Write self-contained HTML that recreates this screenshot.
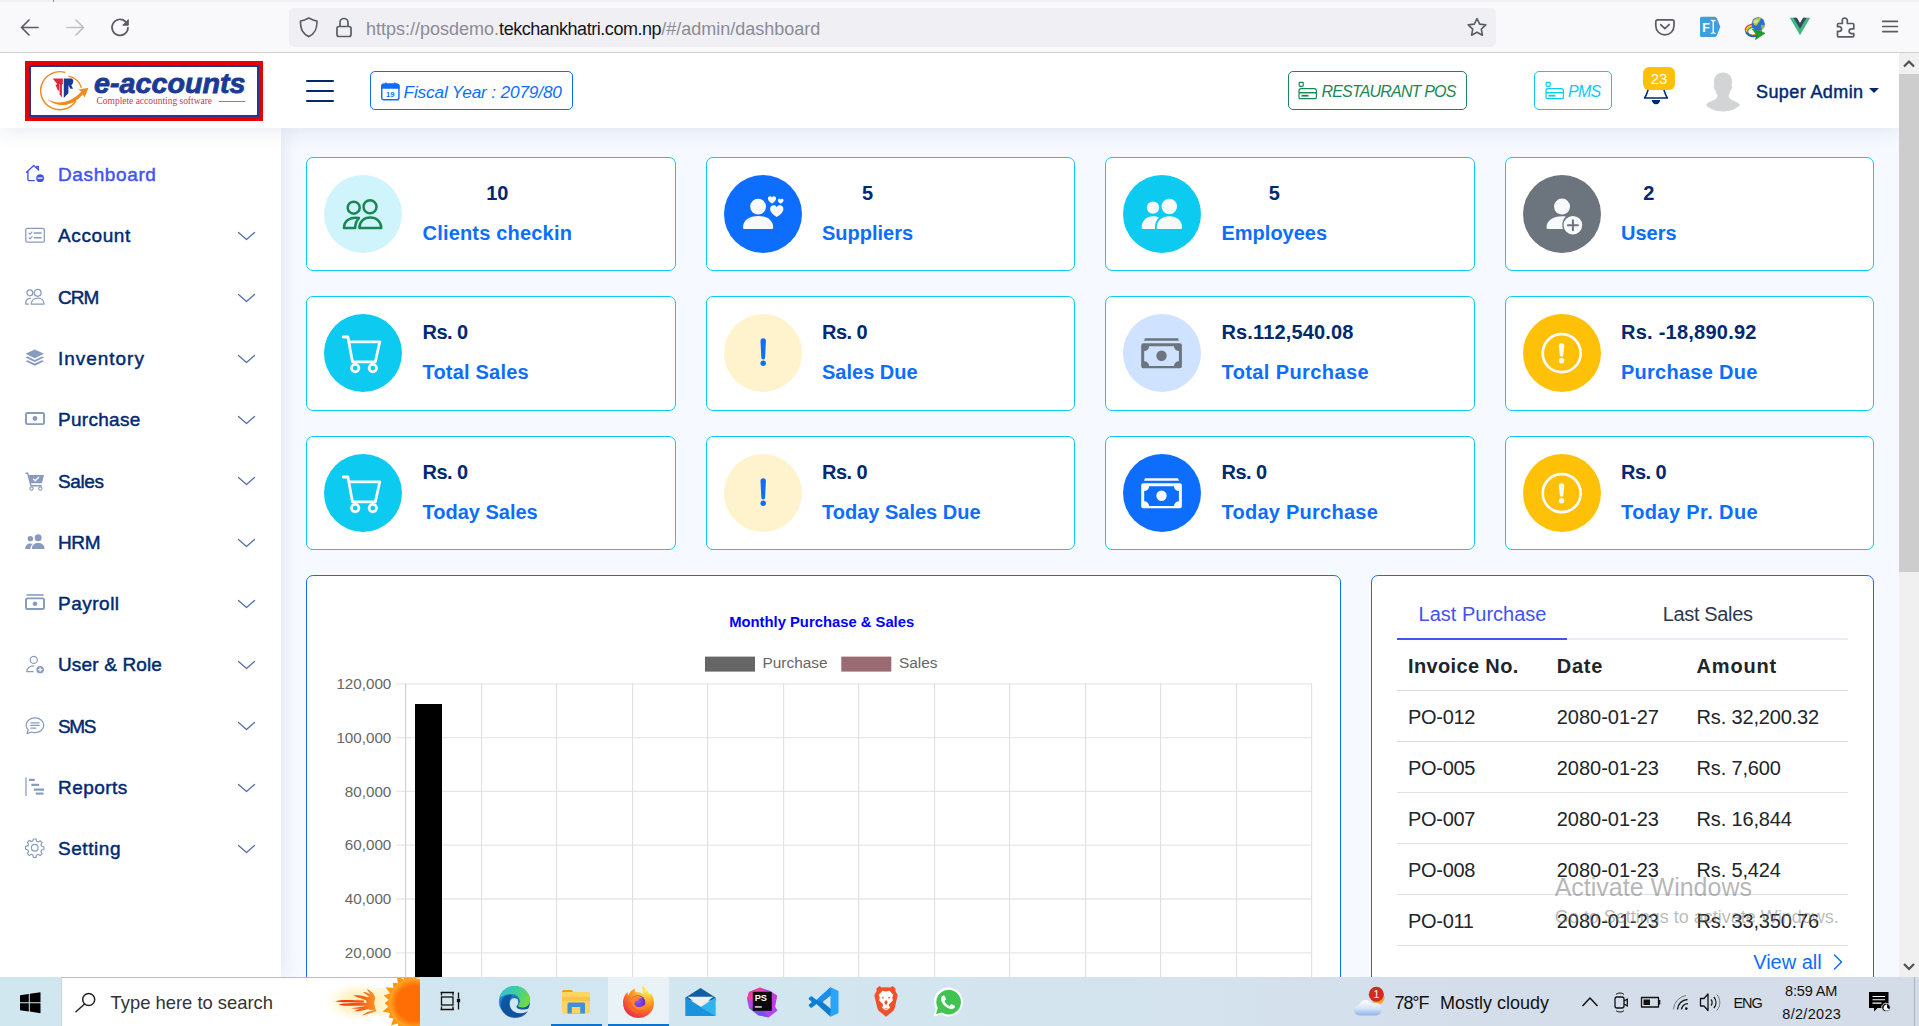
<!DOCTYPE html>
<html><head><meta charset="utf-8">
<style>
*{box-sizing:border-box;margin:0;padding:0}
html,body{width:1919px;height:1026px;overflow:hidden;background:#f6f9ff;font-family:"Liberation Sans",sans-serif;}
.abs{position:absolute}
#chrome{z-index:5;position:absolute;left:0;top:0;width:1919px;height:53px;background:#f9f9fb;border-bottom:1px solid #cfcfd4}
#urlbar{position:absolute;left:289px;top:7.500px;width:1207px;height:39.500px;background:#f0f0f4;border-radius:5px}
#url{position:absolute;left:366px;top:19.200px;font-size:18px;line-height:20px;color:#8b8b97;letter-spacing:0px;white-space:nowrap}
#url b{font-weight:normal;color:#15141a}
#header{position:absolute;left:0;top:53px;width:1899px;height:75px;background:#fff;box-shadow:0 2px 20px rgba(1,41,112,.1)}
#sidebar{position:absolute;left:0;top:128px;width:281px;height:849px;background:#fff;box-shadow:0 0 20px rgba(1,41,112,.1)}
#main{position:absolute;left:281px;top:128px;width:1618px;height:849px;background:#f6f9ff}
#vscroll{position:absolute;left:1899px;top:53px;width:20px;height:924px;background:#f0f0f0}
#vthumb{position:absolute;left:0;top:21px;width:20px;height:498px;background:#cdcdcd}
#taskbar{position:absolute;left:0;top:977px;width:1919px;height:49px;background:linear-gradient(90deg,#d0e7f0 0%,#d2e6f0 40%,#d4e3ee 62%,#d4deea 76%,#d4dce8 100%)}
.nav{position:absolute;left:58px;font-size:19px;line-height:22px;white-space:nowrap}
.card{position:absolute;width:369.700px;height:114px;background:#fff;border:1.500px solid #0dcaf0;border-radius:7px}
.circ{position:absolute;left:17.200px;top:16.500px;width:78px;height:78px;border-radius:50%}
.grp{position:absolute;left:115.500px;top:22.500px;text-align:center}
.val{font-size:20px;line-height:24px;font-weight:bold;color:#012970;white-space:nowrap}
.lbl{margin-top:16px;font-size:20px;line-height:24px;font-weight:bold;color:#0d6efd;white-space:nowrap}
.panel{position:absolute;background:#fff;border:1.5px solid #0d6efd;border-radius:7px}
.btn{background:#fff;border:1.5px solid;border-radius:5px}
.hbtxt{font-size:17px;line-height:22px;font-style:italic;white-space:nowrap}
.rt{font-size:20px;line-height:24px;color:#212529;white-space:nowrap}
</style></head><body>
<div id="chrome">
  <div style="position:absolute;left:0;top:0;width:1919px;height:2px;background:#f0f0f4"></div>
  <div style="position:absolute;left:53px;top:0;width:1px;height:2px;background:#8f8f9d"></div>
  <svg class="abs" style="left:0;top:0" width="289" height="52" fill="none" stroke="#5b5b66" stroke-width="1.7" stroke-linecap="round" stroke-linejoin="round">
    <path d="M38 27.5H22M29 20l-7.5 7.5L29 35"/>
    <path d="M67 27.5h16M76 20l7.5 7.5L76 35" stroke="#bfbfc9"/>
    <path d="M128 27.5a8 8 0 1 1-2.6-6"/>
    <path d="M128.3 20v5.2h-5.2z" fill="#5b5b66" stroke-width="1"/>
  </svg>
  <div id="urlbar"></div>
  <svg class="abs" style="left:289px;top:8px" width="80" height="38" fill="none" stroke="#5b5b66" stroke-width="1.7" stroke-linejoin="round">
    <path d="M19.8 10 C16 12 14 12.6 11.5 13 C11.5 22 14 26 19.8 28.6 C25.5 26 28 22 28 13 C25.5 12.6 23.5 12 19.8 10z"/>
    <rect x="48" y="18.5" width="14" height="10" rx="2"/>
    <path d="M51 18.5v-4a4 4 0 0 1 8 0v4"/>
  </svg>
  <div id="url"><span id="u1">https://posdemo.</span><b id="u2" style="letter-spacing:-0.45px">tekchankhatri.com.np</b><span id="u3">/#/admin/dashboard</span></div>
  <svg class="abs" style="left:1460px;top:8px" width="36" height="38" fill="none" stroke="#5b5b66" stroke-width="1.6" stroke-linejoin="round">
    <path d="M17 10.5l2.7 5.6 6.1.8-4.5 4.2 1.1 6.1-5.4-3-5.4 3 1.1-6.1-4.5-4.2 6.1-.8z"/>
  </svg>
  <svg class="abs" style="left:1640px;top:8px" width="279" height="38" fill="none" stroke="#5b5b66" stroke-width="1.6" stroke-linejoin="round" stroke-linecap="round">
    <!-- pocket -->
    <path d="M17.500 11.800h14.800a1.700 1.700 0 0 1 1.700 1.700v4.300a9.100 9.100 0 0 1-18.200 0v-4.300a1.700 1.700 0 0 1 1.700-1.700z" stroke-width="1.700"/>
    <path d="M20.700 16.600l4.200 4 4.200-4" stroke-width="1.700"/>
    <!-- FI ext -->
    <path d="M61.500 8.800h13.500l1.800 1.200 3.500 8.800-3.500 8.900-1.800 1.200H61.500a1.500 1.500 0 0 1-1.500-1.500V10.300a1.500 1.500 0 0 1 1.500-1.500z" fill="#3f9fdc" stroke="none"/>
    <text x="62.300" y="24" font-family="Liberation Sans" font-size="12.500" font-weight="bold" fill="#fff" stroke="none">F</text>
    <path d="M71.300 12.300c1 0 1.600.4 1.900 1 .3-.6.900-1 1.900-1M71.300 25.300c1 0 1.600-.4 1.900-1 .3.600.9 1 1.900 1M73.200 13.300v11" stroke="#fff" stroke-width="1.300" fill="none"/>
    <!-- idm -->
    <ellipse cx="112.500" cy="22" rx="7" ry="5.500" fill="none" stroke="#e8432e" stroke-width="1.500"/>
    <ellipse cx="113.500" cy="22.500" rx="7" ry="5" fill="none" stroke="#f2c21b" stroke-width="1.500"/>
    <ellipse cx="114.500" cy="23.500" rx="7" ry="4.500" fill="none" stroke="#3aa845" stroke-width="1.500"/>
    <path d="M106.500 25c2 3 7 4 11 2.500" stroke="#2b62c9" stroke-width="2" fill="none"/>
    <circle cx="118.200" cy="16" r="6.700" fill="#2d6fd0" stroke="none"/>
    <path d="M113 13c1.500-2.500 5-4 8-3-1 1.500-.5 3-2 4s-1 3-3 3.500-2-2-3-2.500-.500-1.300 0-2z" fill="#b8c93a" stroke="none"/>
    <path d="M121 17c1.500-.5 3 .5 3.500 1.500-.5 1.500-1.500 2.500-2.500 3-.5-1.500-1.500-3-1-4.500z" fill="#8fbf3a" stroke="none"/>
    <circle cx="116" cy="13.500" r="2" fill="#fff" opacity=".45" stroke="none"/>
    <path d="M112.500 21l12.500 4.200-9.500 6.300 1-4.500z" fill="#1f9d2a" stroke="#117a1c" stroke-width=".6"/>
    <!-- vue -->
    <path d="M149.800 9.800h6.200l4 6.900 4-6.900h6.200l-10.200 17.500z" fill="#41b883" stroke="none"/>
    <path d="M153.500 9.800h3.400l3.100 5.300 3.100-5.300h3.400l-6.500 11.200z" fill="#35495e" stroke="none"/>
    <!-- puzzle -->
    <path d="M198.500 15.500h3.800v-3a2.500 2.500 0 1 1 5 0v3h5.500a1 1 0 0 1 1 1v4.300h-2.300a2.400 2.400 0 1 0 0 4.800h2.300v2.200a1 1 0 0 1-1 1h-14.300a1 1 0 0 1-1-1v-4.500h1.800a2.300 2.300 0 1 0 0-4.600h-1.800v-2.200a1 1 0 0 1 1-1z" stroke-width="1.700"/>
    <!-- menu -->
    <path d="M242.800 13.400h14.600M242.800 18.500h14.600M242.800 23.600h14.600" stroke-width="1.700"/>
  </svg>
</div>
<div id="main">
<div class="card" style="left:25.0px;top:29.0px"><div class="circ" style="background:#cff4fc"><svg width="78" height="78" viewBox="0 0 78 78"><g fill="none" stroke="#198754" stroke-width="2.500" stroke-linejoin="round"><circle cx="46" cy="31.700" r="6.500"/><path d="M35.400 53c0-6.500 4.500-10.400 10.800-10.400S57.200 46.500 57.200 53z"/><circle cx="29.700" cy="32.700" r="6"/><path d="M35 43c-9-1.500-15 3-15 10h11.200c0-4 1.300-7.500 3.800-10z"/></g></svg></div>
<div class="grp" id="g0"><div class="val" id="v0">10</div><div class="lbl" id="l0" style="letter-spacing:0.19px">Clients checkin</div></div></div>
<div class="card" style="left:424.5px;top:29.0px"><div class="circ" style="background:#0d6efd"><svg width="78" height="78" viewBox="0 0 78 78"><g fill="#f8f9fa"><circle cx="34.100" cy="31.600" r="7.900"/><path d="M19 52.500c0-7.500 6.500-11.500 15.100-11.500s15.100 4 15.100 11.500c0 1-.7 1.500-1.500 1.500H20.500c-.8 0-1.500-.5-1.500-1.500z"/><path d="M52.700 42c-4.500-3-6.600-5.200-6.600-8 0-4 5-5 6.600-1.700 1.700-3.300 6.700-2.300 6.700 1.700 0 2.800-2.200 5-6.700 8z"/><path d="M48 28.600c-2.800-1.900-4.100-3.300-4.100-5 0-2.500 3.100-3.100 4.100-1.100 1-2 4.100-1.400 4.100 1.100 0 1.700-1.300 3.100-4.100 5z"/><path d="M56.700 28.800c-2-1.300-2.900-2.300-2.900-3.500 0-1.700 2.200-2.200 2.900-.8.700-1.400 2.900-.9 2.900.8 0 1.200-.9 2.200-2.900 3.500z"/></g></svg></div>
<div class="grp" id="g1"><div class="val" id="v1">5</div><div class="lbl" id="l1">Suppliers</div></div></div>
<div class="card" style="left:824.0px;top:29.0px"><div class="circ" style="background:#0dcaf0"><svg width="78" height="78" viewBox="0 0 78 78"><g fill="#f8f9fa"><circle cx="46.300" cy="31.600" r="7.750"/><path d="M33.700 52.500c0-7 5.500-11.300 12.700-11.300s12.700 4.300 12.700 11.300c0 1-.7 1.500-1.500 1.500H35.200c-.8 0-1.500-.5-1.500-1.500z"/><circle cx="30" cy="32.600" r="6.200"/><path d="M20.200 54c-.8 0-1.500-.5-1.500-1.500 0-7 4.800-11.300 11.300-11.300 2.200 0 4.300.4 6 1.200-2.700 2.500-4.100 6-4.100 10.100 0 .5.100 1 .2 1.500z"/></g></svg></div>
<div class="grp" id="g2"><div class="val" id="v2">5</div><div class="lbl" id="l2">Employees</div></div></div>
<div class="card" style="left:1223.5px;top:29.0px"><div class="circ" style="background:#6c757d"><svg width="78" height="78" viewBox="0 0 78 78"><g fill="#f8f9fa"><circle cx="39" cy="31.600" r="8"/><path d="M23.500 52.500c0-7 6.500-11.300 15.500-11.300 1.300 0 2.600.1 3.800.3-2.200 2.100-3.500 5-3.500 8.500 0 1.400.2 2.800.7 4H25c-.8 0-1.500-.5-1.500-1.500z"/><circle cx="49.900" cy="50.200" r="9.300"/><path d="M49.900 45.200v10M44.900 50.200h10" stroke="#6c757d" stroke-width="2" stroke-linecap="round"/></g></svg></div>
<div class="grp" id="g3"><div class="val" id="v3">2</div><div class="lbl" id="l3">Users</div></div></div>
<div class="card" style="left:25.0px;top:168px;height:115px"><div class="circ" style="background:#0dcaf0"><svg width="78" height="78" viewBox="0 0 78 78"><g fill="none" stroke="#f8f9fa" stroke-width="2.800" stroke-linecap="round" stroke-linejoin="round"><path d="M19.200 23h4.700l4.600 24.900h22.800l4.500-20.100H25.600"/><circle cx="31.200" cy="54.100" r="3.700"/><circle cx="48.800" cy="54.100" r="3.700"/></g></svg></div>
<div class="grp" id="g4"><div class="val" id="v4" style="text-align:left;letter-spacing:-0.55px">Rs. 0</div><div class="lbl" id="l4" style="letter-spacing:0.2px">Total Sales</div></div></div>
<div class="card" style="left:424.5px;top:168px;height:115px"><div class="circ" style="background:#fff3cd"><svg width="78" height="78" viewBox="0 0 78 78"><g fill="#0d6efd"><path d="M36.500 27a2.700 2.700 0 0 1 5.400 0l-.8 16.500a1.900 1.900 0 0 1-3.800 0z"/><circle cx="39.200" cy="49.200" r="2.700"/></g></svg></div>
<div class="grp" id="g5"><div class="val" id="v5" style="text-align:left;letter-spacing:-0.55px">Rs. 0</div><div class="lbl" id="l5">Sales Due</div></div></div>
<div class="card" style="left:824.0px;top:168px;height:115px"><div class="circ" style="background:#cfe2ff"><svg width="78" height="78" viewBox="0 0 78 78"><g><path d="M22 24.300h33l1 2.500H21z" fill="#6c757d"/><path d="M20.200 29.300h36.700a2 2 0 0 1 2 2v20.900a2 2 0 0 1-2 2H20.200a2 2 0 0 1-2-2V31.300a2 2 0 0 1 2-2zM26.100 32.200a4.900 4.900 0 0 1-4.900 4.900v10.100a4.900 4.900 0 0 1 4.900 4.900h24.900a4.900 4.900 0 0 1 4.900-4.900V37.100a4.900 4.900 0 0 1-4.900-4.900z" fill="#6c757d" fill-rule="evenodd"/><circle cx="38.500" cy="41.700" r="5.200" fill="#6c757d"/></g></svg></div>
<div class="grp" id="g6"><div class="val" id="v6" style="text-align:left;letter-spacing:0.15px">Rs.112,540.08</div><div class="lbl" id="l6" style="letter-spacing:0.4px">Total Purchase</div></div></div>
<div class="card" style="left:1223.5px;top:168px;height:115px"><div class="circ" style="background:#ffc107"><svg width="78" height="78" viewBox="0 0 78 78"><g><circle cx="38.700" cy="39.200" r="19" fill="none" stroke="#f8f9fa" stroke-width="2.700"/><path d="M35.800 32a2.750 2.750 0 0 1 5.500 0l-1 9a1.750 1.750 0 0 1-3.500 0z" fill="#f8f9fa"/><circle cx="38.600" cy="46.700" r="2.700" fill="#f8f9fa"/></g></svg></div>
<div class="grp" id="g7"><div class="val" id="v7" style="text-align:left;letter-spacing:0.24px">Rs. -18,890.92</div><div class="lbl" id="l7" style="letter-spacing:0.26px">Purchase Due</div></div></div>
<div class="card" style="left:25.0px;top:308.0px"><div class="circ" style="background:#0dcaf0"><svg width="78" height="78" viewBox="0 0 78 78"><g fill="none" stroke="#f8f9fa" stroke-width="2.800" stroke-linecap="round" stroke-linejoin="round"><path d="M19.200 23h4.700l4.600 24.900h22.800l4.500-20.100H25.600"/><circle cx="31.200" cy="54.100" r="3.700"/><circle cx="48.800" cy="54.100" r="3.700"/></g></svg></div>
<div class="grp" id="g8"><div class="val" id="v8" style="text-align:left;letter-spacing:-0.55px">Rs. 0</div><div class="lbl" id="l8">Today Sales</div></div></div>
<div class="card" style="left:424.5px;top:308.0px"><div class="circ" style="background:#fff3cd"><svg width="78" height="78" viewBox="0 0 78 78"><g fill="#0d6efd"><path d="M36.500 27a2.700 2.700 0 0 1 5.400 0l-.8 16.500a1.900 1.900 0 0 1-3.800 0z"/><circle cx="39.200" cy="49.200" r="2.700"/></g></svg></div>
<div class="grp" id="g9"><div class="val" id="v9" style="text-align:left;letter-spacing:-0.55px">Rs. 0</div><div class="lbl" id="l9">Today Sales Due</div></div></div>
<div class="card" style="left:824.0px;top:308.0px"><div class="circ" style="background:#0d6efd"><svg width="78" height="78" viewBox="0 0 78 78"><g><path d="M22 24.300h33l1 2.500H21z" fill="#f8f9fa"/><path d="M20.200 29.300h36.700a2 2 0 0 1 2 2v20.900a2 2 0 0 1-2 2H20.200a2 2 0 0 1-2-2V31.300a2 2 0 0 1 2-2zM26.100 32.200a4.900 4.900 0 0 1-4.900 4.900v10.100a4.900 4.900 0 0 1 4.900 4.900h24.900a4.900 4.900 0 0 1 4.900-4.900V37.100a4.900 4.900 0 0 1-4.900-4.900z" fill="#f8f9fa" fill-rule="evenodd"/><circle cx="38.500" cy="41.700" r="5.200" fill="#f8f9fa"/></g></svg></div>
<div class="grp" id="g10"><div class="val" id="v10" style="text-align:left;letter-spacing:-0.55px">Rs. 0</div><div class="lbl" id="l10" style="letter-spacing:0.25px">Today Purchase</div></div></div>
<div class="card" style="left:1223.5px;top:308.0px"><div class="circ" style="background:#ffc107"><svg width="78" height="78" viewBox="0 0 78 78"><g><circle cx="38.700" cy="39.200" r="19" fill="none" stroke="#f8f9fa" stroke-width="2.700"/><path d="M35.800 32a2.750 2.750 0 0 1 5.500 0l-1 9a1.750 1.750 0 0 1-3.500 0z" fill="#f8f9fa"/><circle cx="38.600" cy="46.700" r="2.700" fill="#f8f9fa"/></g></svg></div>
<div class="grp" id="g11"><div class="val" id="v11" style="text-align:left;letter-spacing:-0.55px">Rs. 0</div><div class="lbl" id="l11" style="letter-spacing:0.4px">Today Pr. Due</div></div></div>
<div class="panel" style="left:25px;top:447px;width:1035px;height:480px"></div>
<svg class="abs" style="left:25px;top:447px" width="1034" height="420" font-family="Liberation Sans">
<path d="M90.3 108.80H1006" stroke="#e7e7e7" stroke-width="1.300"/>
<path d="M90.3 162.60H1006" stroke="#e7e7e7" stroke-width="1.300"/>
<path d="M90.3 216.40H1006" stroke="#e7e7e7" stroke-width="1.300"/>
<path d="M90.3 270.20H1006" stroke="#e7e7e7" stroke-width="1.300"/>
<path d="M90.3 324.00H1006" stroke="#e7e7e7" stroke-width="1.300"/>
<path d="M90.3 377.80H1006" stroke="#e7e7e7" stroke-width="1.300"/>
<path d="M99.6 108.2V420" stroke="#cfcfcf" stroke-width="1.100"/>
<path d="M175.6 108.2V420" stroke="#e0e0e0" stroke-width="1.100"/>
<path d="M250.6 108.2V420" stroke="#e0e0e0" stroke-width="1.100"/>
<path d="M326.6 108.2V420" stroke="#e0e0e0" stroke-width="1.100"/>
<path d="M401.6 108.2V420" stroke="#e0e0e0" stroke-width="1.100"/>
<path d="M477.6 108.2V420" stroke="#e0e0e0" stroke-width="1.100"/>
<path d="M552.6 108.2V420" stroke="#e0e0e0" stroke-width="1.100"/>
<path d="M628.6 108.2V420" stroke="#e0e0e0" stroke-width="1.100"/>
<path d="M703.6 108.2V420" stroke="#e0e0e0" stroke-width="1.100"/>
<path d="M779.6 108.2V420" stroke="#e0e0e0" stroke-width="1.100"/>
<path d="M854.6 108.2V420" stroke="#e0e0e0" stroke-width="1.100"/>
<path d="M930.6 108.2V420" stroke="#e0e0e0" stroke-width="1.100"/>
<path d="M1005.6 108.2V420" stroke="#e0e0e0" stroke-width="1.100"/>
<rect x="109" y="129.0" width="27" height="300" fill="#000"/>
<text id="ctitle" x="515.7" y="51.6" text-anchor="middle" font-size="14.800" font-weight="bold" fill="#0000ff">Monthly Purchase &amp; Sales</text>
<rect x="399" y="81.6" width="50" height="15" fill="#666"/>
<text x="456.5" y="92.6" font-size="15.400" fill="#666">Purchase</text>
<rect x="535.3" y="81.6" width="50" height="15" fill="#9b6b73"/>
<text x="593.0" y="92.6" font-size="15.400" fill="#666">Sales</text>
<text x="85.3" y="113.9" text-anchor="end" font-size="15.200" fill="#666">120,000</text>
<text x="85.3" y="167.7" text-anchor="end" font-size="15.200" fill="#666">100,000</text>
<text x="85.3" y="221.5" text-anchor="end" font-size="15.200" fill="#666">80,000</text>
<text x="85.3" y="275.3" text-anchor="end" font-size="15.200" fill="#666">60,000</text>
<text x="85.3" y="329.1" text-anchor="end" font-size="15.200" fill="#666">40,000</text>
<text x="85.3" y="382.9" text-anchor="end" font-size="15.200" fill="#666">20,000</text>
</svg>
<div class="panel" style="left:1090px;top:447px;width:503px;height:480px"></div>
<div class="abs" style="left:1116px;top:510.3px;width:451px;height:2px;background:#e9ecf4"></div>
<div class="abs" style="left:1116px;top:510.3px;width:170px;height:2.200px;background:#4154f1"></div>
<div class="abs rt" id="t1" style="left:1137.6px;top:474.4px;color:#4154f1">Last Purchase</div>
<div class="abs rt" id="t2" style="left:1381.7px;top:474.4px;color:#2c384e;letter-spacing:-0.35px">Last Sales</div>
<div class="abs rt" id="h1" style="left:1127.1px;top:525.5px;font-weight:bold;letter-spacing:0.35px">Invoice No.</div>
<div class="abs rt" id="h2" style="left:1275.7px;top:525.5px;font-weight:bold;letter-spacing:0.75px">Date</div>
<div class="abs rt" id="h3" style="left:1415.6px;top:525.5px;font-weight:bold;letter-spacing:0.8px">Amount</div>
<div class="abs rt" id="r0a" style="left:1127.1px;top:577.3px;letter-spacing:-0.33px">PO-012</div>
<div class="abs rt" id="r0b" style="left:1275.7px;top:577.3px;">2080-01-27</div>
<div class="abs rt" id="r0c" style="left:1415.6px;top:577.3px;letter-spacing:-0.17px">Rs. 32,200.32</div>
<div class="abs rt" id="r1a" style="left:1127.1px;top:628.3px;letter-spacing:-0.33px">PO-005</div>
<div class="abs rt" id="r1b" style="left:1275.7px;top:628.3px;">2080-01-23</div>
<div class="abs rt" id="r1c" style="left:1415.6px;top:628.3px;letter-spacing:-0.17px">Rs. 7,600</div>
<div class="abs rt" id="r2a" style="left:1127.1px;top:679.3px;letter-spacing:-0.33px">PO-007</div>
<div class="abs rt" id="r2b" style="left:1275.7px;top:679.3px;">2080-01-23</div>
<div class="abs rt" id="r2c" style="left:1415.6px;top:679.3px;letter-spacing:-0.17px">Rs. 16,844</div>
<div class="abs rt" id="r3a" style="left:1127.1px;top:730.3px;letter-spacing:-0.33px">PO-008</div>
<div class="abs rt" id="r3b" style="left:1275.7px;top:730.3px;">2080-01-23</div>
<div class="abs rt" id="r3c" style="left:1415.6px;top:730.3px;letter-spacing:-0.17px">Rs. 5,424</div>
<div class="abs rt" id="r4a" style="left:1127.1px;top:781.3px;letter-spacing:-0.33px">PO-011</div>
<div class="abs rt" id="r4b" style="left:1275.7px;top:781.3px;">2080-01-23</div>
<div class="abs rt" id="r4c" style="left:1415.6px;top:781.3px;letter-spacing:-0.17px">Rs. 33,350.76</div>
<div class="abs" style="left:1116px;top:561.8px;width:451px;height:1.200px;background:#dcdfe5"></div>
<div class="abs" style="left:1116px;top:612.8px;width:451px;height:1.200px;background:#dcdfe5"></div>
<div class="abs" style="left:1116px;top:663.8px;width:451px;height:1.200px;background:#dcdfe5"></div>
<div class="abs" style="left:1116px;top:714.8px;width:451px;height:1.200px;background:#dcdfe5"></div>
<div class="abs" style="left:1116px;top:765.8px;width:451px;height:1.200px;background:#dcdfe5"></div>
<div class="abs" style="left:1116px;top:816.8px;width:451px;height:1.200px;background:#dcdfe5"></div>
<div class="abs rt" id="va" style="left:1472.2px;top:822.1px;color:#0d6efd">View all</div>
<svg class="abs" style="left:1550px;top:825px" width="14" height="18" fill="none" stroke="#0d6efd" stroke-width="1.500" stroke-linecap="round" stroke-linejoin="round"><path d="M3.500 2l7 7-7 7"/></svg>
<div class="abs" id="wm1" style="left:1273.7px;top:744px;font-size:25px;line-height:30px;color:rgba(120,120,120,.55);white-space:nowrap">Activate Windows</div>
<div class="abs" id="wm2" style="left:1273.7px;top:778px;font-size:18px;line-height:22px;color:rgba(120,120,120,.5);white-space:nowrap">Go to Settings to activate Windows.</div>
</div>
<div id="sidebar">
<svg class="abs" style="left:25px;top:36.3px" width="20" height="20" viewBox="0 0 20.500 20.500"><g stroke="#4154f1" fill="none" stroke-width="1.400" stroke-linejoin="round" stroke-linecap="round"><path d="M1.500 8.500L9 1.500l5 4.700M12 4V2.500h1.700v3.300M3 7.200V16a1 1 0 0 0 1 1h5.500"/><circle cx="15.500" cy="14.500" r="4" fill="#4154f1" stroke="none"/><path d="M13.500 14.500h4" stroke="#fff" stroke-width="1.300"/></g></svg>
<div class="nav" id="n0" style="letter-spacing:0.62px;top:36.1px;color:#4154f1;-webkit-text-stroke:0.45px #4154f1">Dashboard</div>
<svg class="abs" style="left:25px;top:97.6px" width="20" height="20" viewBox="0 0 20.500 20.500"><g stroke="#899bbd" fill="none" stroke-width="1.300" stroke-linecap="round" stroke-linejoin="round"><rect x="0.800" y="2.500" width="19" height="14" rx="1.500"/><path d="M9.500 7.200h7M9.500 12h7" stroke-width="1.600"/><path d="M4 7.300l1.200 1.200 2-2.400M4 12l1.200 1.200 2-2.400" stroke-width="1.100"/></g></svg>
<div class="nav" id="n1" style="letter-spacing:0.61px;top:97.4px;color:#012970;-webkit-text-stroke:0.45px #012970">Account</div>
<svg class="abs" style="left:237px;top:102.3px" width="19" height="12" fill="none" stroke="#5570a8" stroke-width="1.300" stroke-linecap="round" stroke-linejoin="round"><path d="M1.500 2.500l8 7 8-7"/></svg>
<svg class="abs" style="left:25px;top:158.8px" width="20" height="20" viewBox="0 0 20.500 20.500"><g stroke="#899bbd" fill="none" stroke-width="1.300" stroke-linejoin="round"><circle cx="13" cy="6" r="3.500"/><path d="M6.500 17.500c0-4 3-6 6.500-6s6.500 2 6.500 6z"/><circle cx="5" cy="6" r="3"/><path d="M6 11.700c-3.500-.5-5.500 2-5.300 5.800H4"/></g></svg>
<div class="nav" id="n2" style="letter-spacing:-1.0px;top:158.6px;color:#012970;-webkit-text-stroke:0.45px #012970">CRM</div>
<svg class="abs" style="left:237px;top:163.5px" width="19" height="12" fill="none" stroke="#5570a8" stroke-width="1.300" stroke-linecap="round" stroke-linejoin="round"><path d="M1.500 2.500l8 7 8-7"/></svg>
<svg class="abs" style="left:25px;top:220.1px" width="20" height="20" viewBox="0 0 20.500 20.500"><g fill="#899bbd"><path d="M10 1.500L0.500 6 10 10.500 19.500 6z"/><path d="M2.700 8.700L0.500 9.800 10 14.300l9.500-4.500-2.200-1.100L10 12.200z"/><path d="M2.700 12.500L0.500 13.600 10 18.100l9.500-4.500-2.200-1.100L10 16z"/></g></svg>
<div class="nav" id="n3" style="letter-spacing:0.97px;top:219.9px;color:#012970;-webkit-text-stroke:0.45px #012970">Inventory</div>
<svg class="abs" style="left:237px;top:224.8px" width="19" height="12" fill="none" stroke="#5570a8" stroke-width="1.300" stroke-linecap="round" stroke-linejoin="round"><path d="M1.500 2.500l8 7 8-7"/></svg>
<svg class="abs" style="left:25px;top:281.4px" width="20" height="20" viewBox="0 0 20.500 20.500"><g><rect x="1" y="4" width="18.500" height="11.500" rx="1.500" fill="none" stroke="#899bbd" stroke-width="2"/><circle cx="10.200" cy="9.700" r="2.500" fill="#899bbd"/></g></svg>
<div class="nav" id="n4" style="letter-spacing:0.29px;top:281.2px;color:#012970;-webkit-text-stroke:0.45px #012970">Purchase</div>
<svg class="abs" style="left:237px;top:286.1px" width="19" height="12" fill="none" stroke="#5570a8" stroke-width="1.300" stroke-linecap="round" stroke-linejoin="round"><path d="M1.500 2.500l8 7 8-7"/></svg>
<svg class="abs" style="left:25px;top:342.7px" width="20" height="20" viewBox="0 0 20.500 20.500"><g fill="#899bbd"><path d="M0.500 1.500h2.800l.7 2.700h15.500l-2.200 8.300H6.200l.5 1.800h10.500v1.500H5.600L2.200 3H0.500z"/><circle cx="6.700" cy="18" r="1.700" fill="none" stroke="#899bbd" stroke-width="1.100"/><circle cx="15.700" cy="18" r="1.700" fill="none" stroke="#899bbd" stroke-width="1.100"/><path d="M8.500 8l2 2 3.800-3.800" stroke="#fff" stroke-width="1.300" fill="none"/></g></svg>
<div class="nav" id="n5" style="letter-spacing:-0.38px;top:342.5px;color:#012970;-webkit-text-stroke:0.45px #012970">Sales</div>
<svg class="abs" style="left:237px;top:347.4px" width="19" height="12" fill="none" stroke="#5570a8" stroke-width="1.300" stroke-linecap="round" stroke-linejoin="round"><path d="M1.500 2.500l8 7 8-7"/></svg>
<svg class="abs" style="left:25px;top:403.9px" width="20" height="20" viewBox="0 0 20.500 20.500"><g fill="#899bbd"><circle cx="13.500" cy="6" r="3.600"/><path d="M7 17.500c0-4.500 3-6.300 6.500-6.300s6.500 1.800 6.500 6.300z"/><circle cx="5.500" cy="6.800" r="2.800"/><path d="M0.300 17.500c0-3.800 2.200-5.800 5.200-5.800.9 0 1.700.2 2.300.5-1.500 1.200-2.200 3-2.300 5.300z"/></g></svg>
<div class="nav" id="n6" style="letter-spacing:-0.4px;top:403.7px;color:#012970;-webkit-text-stroke:0.45px #012970">HRM</div>
<svg class="abs" style="left:237px;top:408.6px" width="19" height="12" fill="none" stroke="#5570a8" stroke-width="1.300" stroke-linecap="round" stroke-linejoin="round"><path d="M1.500 2.500l8 7 8-7"/></svg>
<svg class="abs" style="left:25px;top:465.2px" width="20" height="20" viewBox="0 0 20.500 20.500"><g><path d="M1.500 2h17.500" stroke="#899bbd" stroke-width="1.600"/><rect x="1" y="5.500" width="18.500" height="11" rx="1.500" fill="none" stroke="#899bbd" stroke-width="2"/><circle cx="10.200" cy="11" r="2.400" fill="#899bbd"/></g></svg>
<div class="nav" id="n7" style="letter-spacing:0.5px;top:465.0px;color:#012970;-webkit-text-stroke:0.45px #012970">Payroll</div>
<svg class="abs" style="left:237px;top:469.9px" width="19" height="12" fill="none" stroke="#5570a8" stroke-width="1.300" stroke-linecap="round" stroke-linejoin="round"><path d="M1.500 2.500l8 7 8-7"/></svg>
<svg class="abs" style="left:25px;top:526.5px" width="20" height="20" viewBox="0 0 20.500 20.500"><g stroke="#899bbd" fill="none" stroke-width="1.300" stroke-linejoin="round"><circle cx="9" cy="5" r="3.600"/><path d="M9.500 11.200C4.500 11 1.800 13.500 1.800 17h7"/><circle cx="15.500" cy="15" r="3.800" fill="#899bbd" stroke="none"/><path d="M15.500 12.800v4.400M13.300 15h4.400" stroke="#fff" stroke-width="1.200"/></g></svg>
<div class="nav" id="n8" style="letter-spacing:0.15px;top:526.3px;color:#012970;-webkit-text-stroke:0.45px #012970">User &amp; Role</div>
<svg class="abs" style="left:237px;top:531.2px" width="19" height="12" fill="none" stroke="#5570a8" stroke-width="1.300" stroke-linecap="round" stroke-linejoin="round"><path d="M1.500 2.500l8 7 8-7"/></svg>
<svg class="abs" style="left:25px;top:587.7px" width="20" height="20" viewBox="0 0 20.500 20.500"><g stroke="#899bbd" fill="none" stroke-width="1.300" stroke-linecap="round" stroke-linejoin="round"><path d="M10.200 2c5 0 9 3.300 9 7.500s-4 7.500-9 7.500c-1.300 0-2.500-.2-3.600-.6L2 18l1.300-3.600C2 13 1.200 11.300 1.200 9.500c0-4.200 4-7.500 9-7.500z"/><path d="M6 7h8.500M6 9.700h8.500M6 12.400h5"/></g></svg>
<div class="nav" id="n9" style="letter-spacing:-1.4px;top:587.5px;color:#012970;-webkit-text-stroke:0.45px #012970">SMS</div>
<svg class="abs" style="left:237px;top:592.4px" width="19" height="12" fill="none" stroke="#5570a8" stroke-width="1.300" stroke-linecap="round" stroke-linejoin="round"><path d="M1.500 2.500l8 7 8-7"/></svg>
<svg class="abs" style="left:25px;top:649.0px" width="20" height="20" viewBox="0 0 20.500 20.500"><g stroke="#899bbd" fill="none"><path d="M1 0.500v19" stroke-width="1.300"/><path d="M4 3h6M6.500 8h8M9 13h10.500" stroke-width="2.200"/><path d="M11 17h8" stroke-width="2.200"/></g></svg>
<div class="nav" id="n10" style="letter-spacing:0.47px;top:648.8px;color:#012970;-webkit-text-stroke:0.45px #012970">Reports</div>
<svg class="abs" style="left:237px;top:653.7px" width="19" height="12" fill="none" stroke="#5570a8" stroke-width="1.300" stroke-linecap="round" stroke-linejoin="round"><path d="M1.500 2.500l8 7 8-7"/></svg>
<svg class="abs" style="left:25px;top:710.3px" width="20" height="20" viewBox="0 0 20.500 20.500"><g stroke="#899bbd" fill="none" stroke-width="1.200" stroke-linejoin="round"><circle cx="10" cy="10" r="3.400"/><path d="M8.600 1h2.800l.5 2.400 1.700.7 2-1.300 2 2-1.300 2 .7 1.700 2.400.5v2.800l-2.400.5-.7 1.700 1.300 2-2 2-2-1.300-1.700.7-.5 2.400H8.600l-.5-2.400-1.700-.7-2 1.300-2-2 1.300-2-.7-1.700L.6 11.400V8.600L3 8.100l.7-1.700-1.300-2 2-2 2 1.300 1.700-.7z"/></g></svg>
<div class="nav" id="n11" style="letter-spacing:0.56px;top:710.1px;color:#012970;-webkit-text-stroke:0.45px #012970">Setting</div>
<svg class="abs" style="left:237px;top:715.0px" width="19" height="12" fill="none" stroke="#5570a8" stroke-width="1.300" stroke-linecap="round" stroke-linejoin="round"><path d="M1.500 2.500l8 7 8-7"/></svg>
</div>
<div id="header">
  <!-- coordinates inside header are page coords minus 53 in y -->
  <div class="abs" style="left:25px;top:8px;width:238px;height:60px;background:#e60000"></div>
  <div class="abs" style="left:28.700px;top:11.700px;width:230.600px;height:52.600px;background:#1b3a94"></div>
  <div class="abs" style="left:31.100px;top:14.100px;width:225.800px;height:47.800px;background:#fff"></div>
  <svg class="abs" style="left:34.500px;top:16px" width="65" height="45" viewBox="0 0 70 48" fill="none">
    <path d="M32.500 3.500A20.500 20.500 0 1 0 44 34" stroke="#ef8a1d" stroke-width="1.600"/>
    <path d="M36 7.500A19 19 0 0 1 50 20" stroke="#ef8a1d" stroke-width="1.400"/>
    <path d="M13 32c12 7 26 4 37-8l-3.500-2 11-2-4 10.500-2-3.500C40 41 24 42 13 32z" fill="#ef8a1d"/>
    <path d="M19 10h11v6l-4 0 0 8-2-3 0-5z" fill="#e0263c"/>
    <path d="M31 10h8c3 0 3 6 0 7l2 4h-3l-2-4v9l-5 5z" fill="#1b3a94"/>
    <path d="M26.500 12v15l2.500 3.500V12z" fill="#e0263c"/>
    <path d="M22 17l3 6v-7z" fill="#e0263c"/>
  </svg>
  <div id="logot" class="abs" style="left:94px;top:14.500px;font-size:28px;font-weight:bold;font-style:italic;color:#1b3a94;white-space:nowrap;line-height:32px;transform-origin:0 0;transform:scaleX(1.025);-webkit-text-stroke:0.8px #1b3a94">e-accounts</div>
  <div id="logos" class="abs" style="left:96.500px;top:42px;font-family:'Liberation Serif',serif;font-size:9.500px;color:#c8365a;white-space:nowrap;line-height:12px;letter-spacing:-0.02px">Complete accounting software</div>
  <div class="abs" style="left:219px;top:47.500px;width:26px;height:1.600px;background:#dc5a78"></div>
  <!-- hamburger -->
  <div class="abs" style="left:306px;top:26.500px;width:28px;height:2.400px;border-radius:1.200px;background:#012970"></div>
  <div class="abs" style="left:306px;top:36.800px;width:28px;height:2.400px;border-radius:1.200px;background:#012970"></div>
  <div class="abs" style="left:306px;top:47px;width:28px;height:2.400px;border-radius:1.200px;background:#012970"></div>
  <!-- fiscal -->
  <div class="abs btn" style="left:370px;top:18px;width:203px;height:39px;border-color:#0d6efd"></div>
  <svg class="abs" style="left:379.800px;top:27.500px" width="21.500" height="21.500" viewBox="0 0 20 20" fill="none" stroke="#0d6efd" stroke-width="1.300">
    <rect x="1.600" y="3" width="16" height="14.500" rx="2"/>
    <path d="M1.600 6.500h16V5a2 2 0 0 0-2-2h-12a2 2 0 0 0-2 2z" fill="#0d6efd"/>
    <path d="M5.500 1.500v2M13.700 1.500v2"/>
    <text x="5.600" y="14.500" font-family="Liberation Sans" font-size="7" font-weight="bold" fill="#0d6efd" stroke="none">19</text>
  </svg>
  <div id="fy" class="abs hbtxt" style="left:403.500px;top:28px;font-size:17.300px;letter-spacing:-0.18px;color:#0d6efd">Fiscal Year : 2079/80</div>
  <!-- restaurant pos -->
  <div class="abs btn" style="left:1288px;top:18px;width:179px;height:39px;border-color:#198754"></div>
  <svg class="abs" style="left:1298px;top:28px" width="20" height="20" fill="none" stroke="#198754" stroke-width="1.200">
    <rect x="1.200" y="1.300" width="4" height="4" rx="0.800"/>
    <path d="M1 9.500a1.800 1.800 0 0 1 1.800-1.800h13.800a1.800 1.800 0 0 1 1.800 1.800v2.200H1z"/>
    <rect x="1" y="11.700" width="17.400" height="6" rx="1.200"/>
    <path d="M3.500 14.700h7" stroke-width="1.800"/>
  </svg>
  <div id="rp" class="abs hbtxt" style="left:1321.500px;top:28px;font-size:16px;letter-spacing:-0.82px;color:#198754">RESTAURANT POS</div>
  <!-- pms -->
  <div class="abs btn" style="left:1534px;top:18px;width:78px;height:39px;border-color:#0dcaf0"></div>
  <svg class="abs" style="left:1544.500px;top:28px" width="20" height="20" fill="none" stroke="#0dcaf0" stroke-width="1.200">
    <rect x="1.200" y="1.300" width="4" height="4" rx="0.800"/>
    <path d="M1 9.500a1.800 1.800 0 0 1 1.800-1.800h13.800a1.800 1.800 0 0 1 1.800 1.800v2.200H1z"/>
    <rect x="1" y="11.700" width="17.400" height="6" rx="1.200"/>
    <path d="M3.500 14.700h7" stroke-width="1.800"/>
  </svg>
  <div id="pms" class="abs hbtxt" style="left:1568px;top:28px;font-size:16px;letter-spacing:-0.7px;color:#0dcaf0">PMS</div>
  <!-- bell -->
  <svg class="abs" style="left:1640px;top:20px" width="34" height="34" fill="none">
    <path d="M11.200 6.500C9 10 8.500 20 4.500 25h23C23.500 20 23 10 20.800 6.500" stroke="#012970" stroke-width="1.500" stroke-linejoin="round"/>
    <path d="M11.800 27h8.400a4.200 4.200 0 0 1-8.400 0z" fill="#012970"/>
  </svg>
  <div class="abs" style="left:1643px;top:14px;width:32px;height:23px;border-radius:6px;background:#ffc107;color:#fff;font-size:15px;line-height:23px;text-align:center">23</div>
  <!-- avatar -->
  <svg class="abs" style="left:1704px;top:18px" width="38" height="42" fill="#d2d4d6">
    <path d="M19 1.500c5.500 0 9 3.500 9 9 0 2 0 3.500-.5 4.500 1 .2 1 1.500.2 3-.5 1-1 1-1.200 1.500-.5 2.500-1.500 4-2 5 .3 2.500 1 3.500 4 4.800 3 1.200 6.500 2.500 7.500 4.700-3 3.500-9 6.500-17 6.500s-14-3-17-6.500c1-2.200 4.500-3.500 7.500-4.700 3-1.300 3.700-2.300 4-4.800-.5-1-1.500-2.500-2-5-.2-.5-.7-.5-1.200-1.500-.8-1.500-.8-2.800.2-3-.5-1-.5-2.500-.5-4.500 0-5.500 3.500-9 9-9z"/>
  </svg>
  <div id="sa" class="abs" style="left:1756px;top:27.500px;font-size:18px;line-height:22px;letter-spacing:0.4px;color:#012970;white-space:nowrap;-webkit-text-stroke:0.45px #012970">Super Admin</div>
  <div class="abs" style="left:1869.200px;top:35.300px;width:0;height:0;border-left:5.300px solid transparent;border-right:5.300px solid transparent;border-top:5.500px solid #012970"></div>
</div>
<div id="vscroll"><div id="vthumb"></div>
<svg class="abs" style="left:0;top:0" width="20" height="21" fill="none" stroke="#505050" stroke-width="2.200"><path d="M5 13.500l5-5 5 5"/></svg>
<svg class="abs" style="left:0;top:903px" width="20" height="21" fill="none" stroke="#505050" stroke-width="2.200"><path d="M5 8l5 5 5-5"/></svg>
</div>
<div id="taskbar">
  <!-- coords: page y - 977 -->
  <svg class="abs" style="left:19px;top:14px" width="23" height="23" fill="#000"><path d="M1 4.200L9.800 3v8.200H1zM10.800 2.800L21.500 1.200v10H10.800zM1 12.200h8.800v8.200L1 19.200zM10.800 12.200h10.700v10L10.800 20.600z"/></svg>
  <div class="abs" style="left:60.500px;top:0;width:359.500px;height:49px;background:#fff;border-top:1.200px solid #b9bcc0;border-left:1px solid #cfd3d6;overflow:hidden">
    <svg class="abs" style="left:259.500px;top:-1.200px" width="100" height="50" viewBox="0 0 100 50">
      <defs>
        <radialGradient id="sunb" cx="93.1" cy="26.25" r="25" gradientUnits="userSpaceOnUse"><stop offset="0.70" stop-color="#ff6d05"/><stop offset="0.86" stop-color="#ff8c14"/><stop offset="1" stop-color="#ffa92c"/></radialGradient>
        <radialGradient id="glow" cx="38" cy="25" r="1" gradientUnits="userSpaceOnUse" gradientTransform="translate(38 25) scale(34 20) translate(-38 -25)"><stop offset="0" stop-color="#ffe89a" stop-opacity=".95"/><stop offset="0.55" stop-color="#fff0bd" stop-opacity=".7"/><stop offset="1" stop-color="#fff6d8" stop-opacity="0"/></radialGradient>
        <linearGradient id="flm" x1="14" x2="56" gradientUnits="userSpaceOnUse"><stop offset="0" stop-color="#ee2a0c"/><stop offset="0.55" stop-color="#f4501a"/><stop offset="1" stop-color="#ff9a28"/></linearGradient>
      </defs>
      <ellipse cx="38" cy="25" rx="34" ry="20" fill="url(#glow)"/>
      <ellipse cx="60" cy="25" rx="11" ry="14" fill="#fff1bc" opacity=".6"/>
      <g fill="url(#flm)">
        <path d="M14 24.200C20 22.600 30 22.800 43 23.600L43 25.800C31 25.300 21 25.700 14 24.200z"/>
        <path d="M17.500 27.400C24 25.900 34 26 46 26L46 28.600C36 28.800 24 29.500 17.500 27.400z"/>
        <path d="M32.500 18.500C38 17.300 46 19.500 53 22.500L50 25.500C44 22.500 38 20.800 32.500 18.500z"/>
        <path d="M42 15C46 14.800 50.500 17.500 53.500 20.500L51 23C48 19.500 45.500 17.200 42 15z"/>
        <path d="M45.500 11.800C49.500 13.500 53.500 17 54.500 21.500L51.500 22.500C50 18 48 15 45.500 11.800z"/>
        <path d="M30 31.300C35 30.700 40 29.800 46 28.500L47 30.500C41 31.800 35 32.200 30 31.300z"/>
        <path d="M32.500 34.300C38 32 44 30 50 28L51.500 31C45 32.300 38.500 34.800 32.500 34.300z"/>
        <path d="M41 38.700C45 35 50 32.500 55.500 34.300C50.500 35.300 46 37.500 41 38.700z"/>
        <path d="M44 20.500C49 20 54.500 17.500 54 22.500C53.300 25 52.500 26.500 53.800 29C54.300 31.500 55 33.500 55.500 34.400C50 33.500 46.500 32 44 30.500C46 27 46 24 44 20.500z"/>
      </g>
      <polygon points="95.3,0.5 91.8,-5.0 88.8,0.8 84.4,-2.5 82.5,2.7 75.5,-2.3 76.9,6.2 71.8,5.8 72.4,10.9 64.5,10.3 69.2,16.6 62.6,18.3 67.5,23.0 63.7,26.2 67.5,29.5 61.6,34.5 69.2,35.9 67.6,40.5 72.4,41.6 70.0,48.4 76.9,46.3 77.7,51.4 82.5,49.8 84.5,54.6 88.8,51.7 91.8,58.2 95.3,52.0" fill="#ff960f"/>
      <circle cx="93.1" cy="26.25" r="25" fill="url(#sunb)"/>
    </svg>
  </div>
  <svg class="abs" style="left:72px;top:12px" width="26" height="26" fill="none" stroke="#222" stroke-width="1.500" stroke-linecap="round"><circle cx="16.700" cy="10.500" r="6"/><path d="M12.500 15L4 22.700"/></svg>
  <div id="tbs" class="abs" style="left:110.500px;top:13.500px;font-size:18.400px;line-height:24px;color:#333;white-space:nowrap">Type here to search</div>
  <!-- task view -->
  <svg class="abs" style="left:438px;top:13px" width="24" height="24" fill="none" stroke="#111" stroke-width="1.300"><path d="M2.500 2.500h13.500M2.500 19.500h13.500M3.500 2.500v3M15 2.500v3M3.500 16.500v3M15 16.500v3"/><rect x="3.500" y="7" width="11.500" height="8"/><path d="M20.500 2.500v6M20.500 12v7.500" /><path d="M19.500 9.500h2v2h-2z" fill="#111"/></svg>
  <!-- explorer / firefox highlights -->
  <div class="abs" style="left:551px;top:47px;width:51px;height:2px;background:#0a74d0"></div>
  <div class="abs" style="left:607.500px;top:0;width:61.500px;height:49px;background:#e9f2f7"></div>
  <div class="abs" style="left:607.500px;top:47px;width:61.500px;height:2px;background:#0a74d0"></div>
  <!-- edge -->
  <svg class="abs" style="left:498px;top:8px" width="33" height="33" viewBox="0 0 33 33">
    <defs><linearGradient id="eg1" x1="0" y1="0" x2="0.600" y2="1"><stop offset="0" stop-color="#2a9fdc"/><stop offset="1" stop-color="#0b4f9c"/></linearGradient>
    <linearGradient id="eg2" x1="0" y1="0" x2="1" y2="0.300"><stop offset="0" stop-color="#33bfe0"/><stop offset="0.600" stop-color="#3fcf9a"/><stop offset="1" stop-color="#6fd84a"/></linearGradient></defs>
    <circle cx="16.500" cy="16.500" r="15.500" fill="url(#eg1)"/>
    <path d="M1.200 14C2.500 6 9 1 16.500 1 25.500 1 32 7.500 32 15.500c0 4.500-3.500 7-7.500 7-2.500 0-4.500-.8-4.500-2 0-.8 1.800-1.500 1.800-4.500 0-3.500-3.800-7-8.800-7C7.500 9 3 11.500 1.200 14z" fill="url(#eg2)"/>
    <path d="M13.200 14.500c-1 1-1.700 2.500-1.700 4.500 0 5 4.500 9.500 11 9.500 3 0 5.500-1 7.500-2.500l1.500-3c-2 1-4.500 1.500-7 1.500-3.500 0-6-1.200-6-3 0-.8 1.800-1.500 1.800-4.500 0-1-.3-2-.8-3-2.500-1-5-.8-6.300.5z" fill="#d2e6f0"/>
    <path d="M11.500 19c0 5 4.500 9.500 11 9.500 3 0 5.500-1 7.500-2.500-2.500 4.500-7.500 7-13 7C9 33 3 27 3 19.500c0-2.500.8-4.800 2-6.500 2-2.500 5.500-3.500 9-2.500-1.500 1.500-2.500 4.500-2.500 8.500z" fill="#0d4f9e" opacity=".85"/>
  </svg>
  <!-- explorer -->
  <svg class="abs" style="left:561px;top:11px" width="30" height="27" viewBox="0 0 30 27">
    <path d="M1 3.500a1.500 1.500 0 0 1 1.500-1.500h8l2 2.500H1z" fill="#e8a317"/>
    <path d="M1 4h26.500a1.500 1.500 0 0 1 1.500 1.500V24a1.500 1.500 0 0 1-1.500 1.500h-25A1.500 1.500 0 0 1 1 24z" fill="#fcd462"/>
    <path d="M1 9h28v4H1z" fill="#f8c545"/>
    <path d="M6.500 16a1.500 1.500 0 0 1 1.500-1.500h14.500a1.500 1.500 0 0 1 1.500 1.500v9.500H6.500z" fill="#3f8fd9"/><path d="M10.800 19h8.400v6.500h-8.400z" fill="#fcd462"/>
  </svg>
  <!-- firefox -->
  <svg class="abs" style="left:622px;top:8px" width="33" height="34" viewBox="0 0 33 34">
    <defs><radialGradient id="ff1" cx="75%" cy="12%" r="100%"><stop offset="0" stop-color="#fff36b"/><stop offset=".3" stop-color="#ffbd2e"/><stop offset=".6" stop-color="#ff7a1f"/><stop offset="1" stop-color="#e3254f"/></radialGradient>
    <radialGradient id="ff2" cx="45%" cy="40%" r="60%"><stop offset="0" stop-color="#9b59f5"/><stop offset="1" stop-color="#5a2bc4"/></radialGradient></defs>
    <path d="M16.500 33C8 33 1 26.500 1 18 1 12 4 8.500 5.500 7c0 1.500.5 3 1 3.500C7.500 6.500 11 4 13 3.500c-.5 1.500 0 3 1.500 4 2-.5 5 0 7 1.500C20.500 6 20 3 20.500 1c4 2.500 6.500 6 7.500 9.500.5-1 .5-2 .3-3C31 11 32 14.500 32 18c0 8.500-7 15-15.500 15z" fill="url(#ff1)"/>
    <circle cx="16" cy="17.500" r="7.300" fill="url(#ff2)"/>
    <path d="M8.500 15.500c1.500-3.500 5.500-5.500 9-4.500 1.500.5 2.500 1.500 3 2.500-2.500-.5-4.500.5-4.500 2-2.500 0-3.500 1.500-3.500 3 0 2 2 3.500 4.500 3.500 3 0 5.500-1.500 7-4 .5 5-3 9.500-8.500 9.500-5 0-8.500-4-8.500-8.500 0-1.200.5-2.500 1.500-3.500z" fill="#ff8a24"/>
    <path d="M8.500 15.500c-1 1-1.500 2.300-1.500 3.500 0 4.500 3.500 8.500 8.500 8.500 3 0 5.500-1.300 7-3.300-3 1.300-7 1-9.500-1-2.500-2-3.500-4.700-4.500-7.700z" fill="#ff5a2a" opacity=".85"/>
  </svg>
  <!-- mail -->
  <svg class="abs" style="left:684px;top:10px" width="33" height="30" viewBox="0 0 33 30">
    <path d="M1.500 10.500L16.500 1 31.500 10.500v3H1.500z" fill="#0f5fa8"/>
    <path d="M3.500 9.800h26L16.500 19.500z" fill="#eef1f4"/>
    <path d="M1.500 10.500l15 10 15-10V29h-30z" fill="#29a7e8"/>
    <path d="M1.500 10.500L31.500 29h-30z" fill="#1b93dc"/>
    <path d="M16.500 20.500l15-10V29z" fill="#35c0f3" opacity=".55"/>
  </svg>
  <!-- phpstorm -->
  <svg class="abs" style="left:746px;top:9px" width="33" height="33" viewBox="0 0 33 33">
    <path d="M3 6l11-4.500 9 3 8 5-2 11 2.500 4-9 7-10-2.500L3 22l-2-9z" fill="#b345f1"/>
    <path d="M3 6l11-4.500 4 3L8 16 1 13z" fill="#f0409a"/>
    <path d="M23 4.500l8 5-2 11-7-6z" fill="#c03ee0"/>
    <path d="M3 22l9.500 7.500L22.500 31 14 20z" fill="#7a4ff0"/>
    <rect x="6.800" y="5.800" width="19" height="19" fill="#0a0a0a"/>
    <text x="8.700" y="15.300" font-family="Liberation Sans" font-size="9.200" font-weight="bold" fill="#fff">PS</text>
    <rect x="8.800" y="20.300" width="7" height="1.300" fill="#fff"/>
  </svg>
  <!-- vscode -->
  <svg class="abs" style="left:808px;top:9px" width="32" height="32" viewBox="0 0 32 32">
    <path d="M22.500 1.200l7.200 3.300a1.500 1.500 0 0 1 .8 1.300v20.400a1.500 1.500 0 0 1-.8 1.300l-7.200 3.300z" fill="#2aa4f4"/>
    <path d="M22.500 1.200L8.500 14 4 10.500a1.200 1.200 0 0 0-1.500 0L1 12a1 1 0 0 0 0 1.500L4 16l-3 2.500a1 1 0 0 0 0 1.500l1.500 1.500a1.200 1.200 0 0 0 1.500 0l4.500-3.500 14 12.800.5-7.800-8.500-7 8.500-7z" fill="#0b7dd2"/>
    <path d="M22.500 1.200L8.500 14l5.500 2 9-7z" fill="#1a8fe3"/>
  </svg>
  <!-- brave -->
  <svg class="abs" style="left:872px;top:9px" width="28" height="32" viewBox="0 0 28 32">
    <path d="M14 1.200l4.500.2 2-1.400 3.200 2.800-.4 2 2.400 4.500-3 12.700c-.6 2-2 3.500-3.500 4.500L14 30.700l-5.200-4.200C7.300 25.500 5.900 24 5.300 22L2.300 9.300l2.400-4.500-.4-2L7.500 0l2 1.400z" fill="#f0512a"/>
    <path d="M14 5.500l3.500-.8 3.700 4-1 3 .8 2.500-3.500 3.500c-.8.800-.8 1.500-.3 2.300l.8 1.700-4 2.800-4-2.800.8-1.700c.5-.8.500-1.500-.3-2.300L7 14.200l.8-2.500-1-3 3.700-4z" fill="#fff"/>
    <path d="M9.500 10.500l2.500 1-1 1.500zM18.500 10.500l-2.500 1 1 1.500zM14 14l1.800 2.200-1.800 3.300-1.800-3.300zM12 21.500l2 1 2-1-2 2z" fill="#f0512a"/>
  </svg>
  <!-- whatsapp -->
  <svg class="abs" style="left:932px;top:9px" width="32" height="32" viewBox="0 0 32 32">
    <path d="M1.500 30.500l2.200-7.600A14.500 14.500 0 1 1 9.200 28.500z" fill="#fff"/>
    <path d="M4 28l1.800-6A12.300 12.300 0 1 1 10 26.500z" fill="#3fc351"/>
    <path d="M11.500 9.500c-1 0-2.500 1.300-2.500 3.500 0 4.500 6 10 10.500 10 2 0 3.500-1.300 3.500-2.500 0-.5-.3-.7-.7-1l-2.600-1.200c-.5-.2-.8-.1-1.100.3l-1 1.300c-2.300-.8-4.300-2.800-5.100-5l1.100-1.100c.4-.4.400-.7.200-1.200l-1.100-2.500c-.2-.5-.6-.6-1.200-.6z" fill="#fff"/>
  </svg>
  <!-- tray -->
  <svg class="abs" style="left:1350px;top:8px" width="40" height="34" viewBox="0 0 40 34">
    <defs><linearGradient id="cl" x1="0" y1="0" x2="0" y2="1"><stop offset="0" stop-color="#fdfeff"/><stop offset=".55" stop-color="#d6e4f8"/><stop offset="1" stop-color="#8db3ec"/></linearGradient></defs>
    <circle cx="28" cy="13" r="6.500" fill="#f7a531"/>
    <path d="M10 30.500c-3.500 0-6-2.200-6-5.200 0-2.800 2.200-4.800 5-5 .8-3.300 3.600-5.300 6.800-5.300 2.800 0 5 1.400 6.200 3.600 1-.6 2-.9 3.200-.9 3.800 0 6.800 2.800 6.800 6.500 0 3.600-3 6.300-6.800 6.300z" fill="url(#cl)"/>
    <circle cx="26.300" cy="9.200" r="7.500" fill="#d12a1e"/>
    <text x="26.300" y="13.200" text-anchor="middle" font-family="Liberation Sans" font-size="10.500" fill="#fff">1</text>
  </svg>
  <div id="tw1" class="abs" style="left:1394.500px;top:15px;font-size:18px;line-height:22px;color:#111;white-space:nowrap;letter-spacing:-1.100px">78&deg;F</div>
  <div id="tw2" class="abs" style="left:1440px;top:15px;font-size:18px;line-height:22px;color:#111;white-space:nowrap">Mostly cloudy</div>
  <svg class="abs" style="left:1578px;top:10px" width="150" height="30" fill="none" stroke="#111" stroke-width="1.300" stroke-linejoin="round">
    <path d="M4.500 19l7.500-8 7.500 8" stroke-width="1.500"/>
    <!-- meet now -->
    <rect x="37" y="10" width="9" height="11" rx="2"/><path d="M46 14l3.300-2v7l-3.300-2"/><path d="M38 7.500c2-2 6-2 8 0M38 23.500c2 2 6 2 8 0" stroke-width="1"/>
    <!-- battery -->
    <rect x="63.500" y="10.500" width="17" height="9.500"/><path d="M81.500 13v4.500" stroke-width="1.600"/><rect x="65.500" y="12.500" width="6.500" height="5.500" fill="#111" stroke="none"/>
    <!-- wifi -->
    <path d="M95.500 22.500A15 15 0 0 1 108 8.500" stroke="#777" stroke-width="1"/>
    <path d="M99.500 22.500A10.500 10.500 0 0 1 109.500 12.500" stroke-width="1.300"/>
    <path d="M103.500 22.500A6.500 6.500 0 0 1 110 16.700" stroke-width="1.300"/>
    <circle cx="108.300" cy="21.600" r="1.300" fill="#111" stroke="none"/>
    <!-- volume -->
    <path d="M122.500 11.500h3.500l4-4.500v16.500l-4-4.500h-3.500z"/>
    <path d="M133 12.500c1.500 1.500 1.500 4.500 0 6" stroke-width="1.200"/><path d="M135.800 10c3 3 3 8 0 11" stroke-width="1.100"/><path d="M138.800 7.500c4 4.500 4 11.500 0 16" stroke="#777" stroke-width="1"/>
  </svg>
  <div id="teng" class="abs" style="left:1733.500px;top:16px;font-size:14.500px;line-height:20px;color:#111;white-space:nowrap;letter-spacing:-1.100px">ENG</div>
  <div id="tt1" class="abs" style="left:1785px;top:4px;font-size:14.500px;line-height:20px;color:#111;white-space:nowrap;letter-spacing:-0.150px">8:59 AM</div>
  <div id="tt2" class="abs" style="left:1782.300px;top:27px;font-size:14.500px;line-height:20px;color:#111;white-space:nowrap;letter-spacing:0.300px">8/2/2023</div>
  <svg class="abs" style="left:1866px;top:13px" width="26" height="24" viewBox="0 0 26 24">
    <path d="M3 2h19.500v16h-11L8 21.500V18H3z" fill="#000"/>
    <path d="M6.500 6.500h12.500M6.500 9.800h12.500M6.500 13.100h9" stroke="#fff" stroke-width="1.100"/>
    <circle cx="20" cy="17.500" r="4.300" fill="#000" stroke="#d6dee9" stroke-width="1"/>
    <path d="M21.500 14.800a3 3 0 1 0 1.800 4.200 2.600 2.600 0 0 1-1.800-4.200z" fill="#fff"/>
  </svg>
  <div class="abs" style="left:1914px;top:0;width:1px;height:49px;background:#aab3c0"></div>
</div>
</body></html>
